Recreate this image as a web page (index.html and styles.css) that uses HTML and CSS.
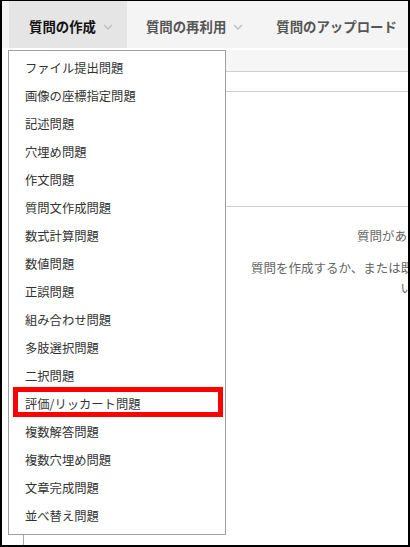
FILE: index.html
```html
<!DOCTYPE html>
<html lang="ja">
<head>
  <meta charset="UTF-8">
  <title>質問の作成</title>
  <link rel="stylesheet" href="styles.css">
</head>
<body>

  <div class="frame">
    <nav class="tabs">
      <div class="tab active">
        <span>質問の作成</span>
        <svg class="chev" width="10" height="6" viewBox="0 0 10 6"><polyline points="1,1 5,5 9,1" fill="none" stroke="#bdbdbd" stroke-width="1.3"/></svg>
      </div>
      <div class="tab">
        <span>質問の再利用</span>
        <svg class="chev" width="10" height="6" viewBox="0 0 10 6"><polyline points="1,1 5,5 9,1" fill="none" stroke="#bdbdbd" stroke-width="1.3"/></svg>
      </div>
      <div class="tab">
        <span>質問のアップロード</span>
      </div>
    </nav>

    <div class="stage">
      <div class="panel">
        <div class="panel-head"></div>
        <div class="panel-row"></div>
        <div class="panel-area"></div>
        <div class="empty">
          <p class="empty-title">質問がありません。</p>
          <p class="empty-text">質問を作成するか、または既存の質問を再利用してください。</p>
        </div>
      </div>
    </div>

    <ul class="menu">
      <li>ファイル提出問題</li>
      <li>画像の座標指定問題</li>
      <li>記述問題</li>
      <li>穴埋め問題</li>
      <li>作文問題</li>
      <li>質問文作成問題</li>
      <li>数式計算問題</li>
      <li>数値問題</li>
      <li>正誤問題</li>
      <li>組み合わせ問題</li>
      <li>多肢選択問題</li>
      <li>二択問題</li>
      <li class="marked">評価/リッカート問題</li>
      <li>複数解答問題</li>
      <li>複数穴埋め問題</li>
      <li>文章完成問題</li>
      <li>並べ替え問題</li>
    </ul>
  </div>

</body>
</html>
```

FILE: styles.css
```css
body {
  margin: 0;
  font-family: "Noto Sans CJK JP", "Noto Sans", sans-serif;
  background: #fff;
}

.frame {
  position: relative;
  width: 410px;
  height: 547px;
  box-sizing: border-box;
  border-style: solid;
  border-color: #000;
  border-width: 1px 2px 2px 2px;
  overflow: hidden;
  background: #fff;
}

.tabs {
  display: flex;
  height: 47px;
  padding-left: 7px;
  background: #f4f4f4;
}

.tab {
  display: flex;
  align-items: center;
  padding: 3px 14px 0 19px;
  font-size: 13.4px;
  font-weight: bold;
  color: #555;
  white-space: nowrap;
}

.tab.active {
  padding-left: 20px;
  background: #e5e5e5;
  color: #111;
}

.chev {
  margin-left: 7px;
  margin-top: 2px;
}

.stage {
  padding: 2px 0 0 21px;
}

.panel {
  width: 778px;
  height: 520px;
  border-left: 1px solid #a8a8a8;
}

.panel-head {
  height: 21px;
  background: #f6f6f6;
  border-bottom: 1px solid #cfcfcf;
}

.panel-row {
  height: 19px;
  border-bottom: 1px solid #cfcfcf;
}

.panel-area {
  height: 114px;
  border-bottom: 1px solid #cfcfcf;
}

.empty {
  padding-top: 19px;
  text-align: center;
  font-size: 12.5px;
  color: #666;
  line-height: 20px;
}

.empty p {
  margin: 0;
}

.empty-title {
  margin-bottom: 12px !important;
}

.empty-text {
  width: 330px;
  margin: 0 auto !important;
}

.menu {
  position: absolute;
  top: 49px;
  left: 6px;
  width: 216px;
  margin: 0;
  padding: 3px 0 4px;
  list-style: none;
  background: #fff;
  border: 1px solid #a0a0a0;
}

.menu li {
  position: relative;
  height: 28px;
  line-height: 28px;
  padding-left: 16px;
  font-size: 12.3px;
  color: #333;
}

.menu li.marked::after {
  content: "";
  position: absolute;
  top: -3px;
  bottom: 1px;
  left: 4px;
  right: 2px;
  border: 5px solid #f00;
}
```
